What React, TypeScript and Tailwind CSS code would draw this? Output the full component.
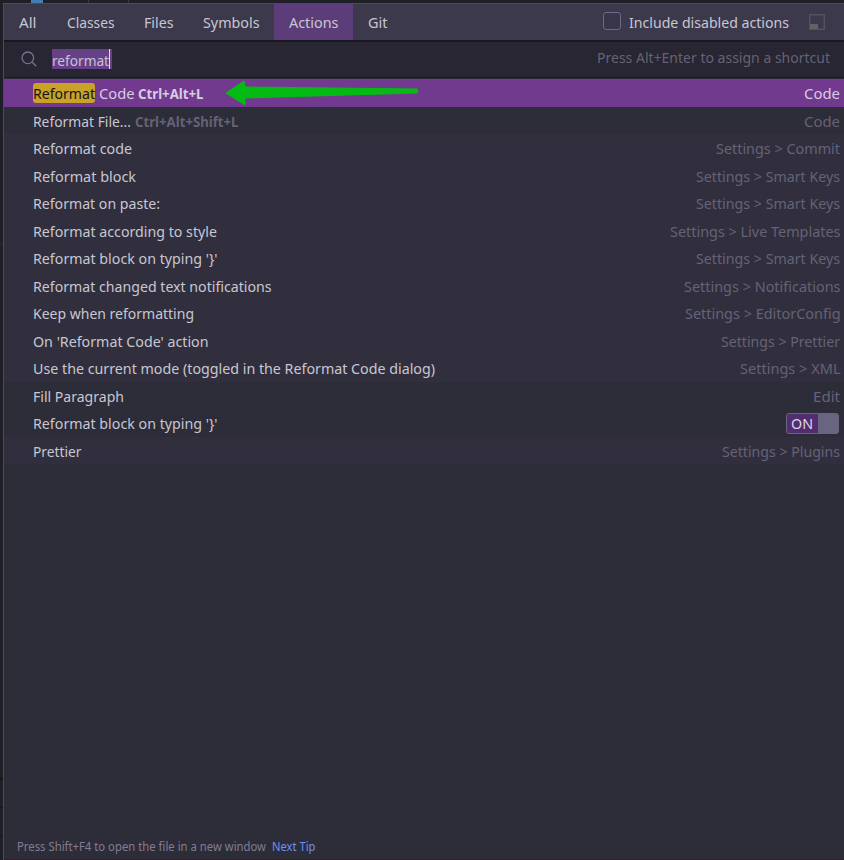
import { useLayoutEffect, useRef } from "react";

type FitProps = { w: number; children: string; className?: string };

/** A single line of text condensed horizontally to fill a given width. */
function Fit({ w, children, className = "" }: FitProps) {
  const ref = useRef<HTMLSpanElement>(null);
  useLayoutEffect(() => {
    const el = ref.current;
    if (!el) return;
    el.style.width = "auto";
    el.style.transform = "none";
    const range = document.createRange();
    range.selectNodeContents(el);
    const natural = range.getBoundingClientRect().width;
    el.style.width = `${w}px`;
    el.style.transform = `scaleX(${w / natural})`;
  }, [w, children]);
  return (
    <span ref={ref} className={`inline-block shrink-0 origin-left whitespace-pre ${className}`}>
      {children}
    </span>
  );
}

const tabs = [
  { label: "All", w: 17.5, box: "w-[48px] pl-[15px]" },
  { label: "Classes", w: 47.5, box: "w-[77px] pl-[15px]" },
  { label: "Files", w: 29.5, box: "w-[59px] pl-[15px]" },
  { label: "Symbols", w: 56.5, box: "w-[86px] pl-[15px]" },
  { label: "Actions", w: 49.5, box: "w-[79px] pl-[15px] bg-[#5c3d79]" },
  { label: "Git", w: 19.5, box: "w-[50px] pl-[15px]" },
];

const rows = [
  { text: "Reformat code", w: 99, path: "Settings > Commit", pw: 124 },
  { text: "Reformat block", w: 103, path: "Settings > Smart Keys", pw: 144 },
  { text: "Reformat on paste:", w: 127, path: "Settings > Smart Keys", pw: 144 },
  { text: "Reformat according to style", w: 184, path: "Settings > Live Templates", pw: 170.5 },
  { text: "Reformat block on typing '}'", w: 184.5, path: "Settings > Smart Keys", pw: 144 },
  { text: "Reformat changed text notifications", w: 238.5, path: "Settings > Notifications", pw: 156.5 },
  { text: "Keep when reformatting", w: 161, path: "Settings > EditorConfig", pw: 155.5 },
  { text: "On 'Reformat Code' action", w: 175.5, path: "Settings > Prettier", pw: 119 },
  { text: "Use the current mode (toggled in the Reformat Code dialog)", w: 402, path: "Settings > XML", pw: 100.5 },
];

const rowClass = "flex shrink-0 items-start justify-between pl-[29px] pr-1 pt-1 text-[#c8c7d1]";

export default function App() {
  return (
    <div className="flex h-[860px] w-[844px] flex-col overflow-hidden bg-[#1f1f27] font-['Noto_Sans',sans-serif] text-[15px] leading-[20px]">
      <div className="flex h-[3px] shrink-0">
        <div className="ml-[31px] h-full w-[12px] bg-[#447bb0]" />
        <div className="ml-[45px] h-full w-px bg-[#373740]" />
        <div className="ml-[39px] h-full w-px bg-[#373740]" />
      </div>
      <div className="flex min-h-0 flex-1">
        <div className="flex w-[3px] shrink-0 flex-col">
          <div className="h-[242px] border-b border-[#292932]" />
          <div className="h-[533px]" />
          <div className="h-[30px] border-t-2 border-b border-[#15151c]" />
          <div className="h-[28px] border-b border-[#15151c]" />
        </div>
        <div className="flex min-w-0 flex-1 flex-col border-l border-t border-[#4c4a5d] bg-[#2d2c39]">
          <div className="flex h-[36px] shrink-0 items-stretch bg-[#3c394d] text-[#c8c7d1]">
            {tabs.map((t) => (
              <div key={t.label} className={`flex shrink-0 items-center ${t.box}`}>
                <Fit w={t.w}>{t.label}</Fit>
              </div>
            ))}
            <div className="ml-auto flex items-center pr-[19px]">
              <div className="mb-[2px] mr-[8px] h-[18px] w-[18px] rounded-[3px] border border-[#716987] bg-[#393649]" />
              <Fit w={160}>Include disabled actions</Fit>
              <svg className="ml-[20px]" width="16" height="16" viewBox="0 0 16 16">
                <path d="M.75.75h14.5v14.5H.75z" fill="none" stroke="#545355" strokeWidth="1.5" />
                <path d="M1 10h8v5H1z" fill="#62625f" />
              </svg>
            </div>
          </div>
          <div className="flex h-[38px] shrink-0 items-center border-b border-t-2 border-[#191820] bg-[#272632] pl-[17px] pr-[14px]">
            <svg className="mb-px" width="16" height="16" viewBox="0 0 16 16" fill="none" stroke="#77728e" strokeWidth="1.3">
              <circle cx="6.8" cy="6.8" r="5.8" />
              <path d="m11 11 4.3 4.3" />
            </svg>
            <div className="mb-[2px] ml-[15px] flex h-5 w-[60px] items-center bg-[#664187] text-[#c8c1d3]">
              <Fit w={57} className="mt-[2px]">reformat</Fit>
              <div className="h-5 w-px bg-[#e0dce5]" />
            </div>
            <Fit w={233} className="mb-[6px] ml-auto text-[#656276]">Press Alt+Enter to assign a shortcut</Fit>
          </div>
          <div className="mt-px flex h-[28px] shrink-0 items-center bg-[#713a8f] pl-[29px] pr-1 text-[#d8cce0]">
            <span className="flex h-5 w-[62px] items-center rounded-[3px] bg-[#c9a227] text-[#16131a]">
              <Fit w={62}>Reformat</Fit>
            </span>
            <Fit w={35.5} className="ml-1">Code</Fit>
            <Fit w={65.5} className="ml-[3.5px] mt-[2px] text-[14px] font-bold">Ctrl+Alt+L</Fit>
            <Fit w={36} className="ml-auto">Code</Fit>
          </div>
          <div className={`${rowClass} h-[27px]`}>
            <Fit w={98}>Reformat File...</Fit>
            <Fit w={103.5} className="ml-1 mt-px text-[14px] font-bold text-[#656276]">Ctrl+Alt+Shift+L</Fit>
            <Fit w={36} className="ml-auto text-[#656276]">Code</Fit>
          </div>
          <div className="bg-[#312f3e]">
            {rows.map((r, i) => (
              <div key={i} className={`${rowClass} ${i % 2 === 0 ? "h-[28px]" : "h-[27px]"}`}>
                <Fit w={r.w}>{r.text}</Fit>
                <Fit w={r.pw} className="text-[#656276]">{r.path}</Fit>
              </div>
            ))}
          </div>
          <div className={`${rowClass} h-[27px]`}>
            <Fit w={91}>Fill Paragraph</Fit>
            <Fit w={27} className="text-[#656276]">Edit</Fit>
          </div>
          <div className={`${rowClass} h-[28px]`}>
            <Fit w={184.5}>{"Reformat block on typing '}'"}</Fit>
            <div className="mr-px flex h-[21px] w-[53px] overflow-hidden rounded-[3px] border border-[#69647f] bg-[#69647f]">
              <div className="flex w-[31px] items-center bg-[#522d70] pl-[4px] text-[#ddd6e3]">
                <Fit w={22} className="mb-[2px]">ON</Fit>
              </div>
            </div>
          </div>
          <div className={`${rowClass} h-[27px] bg-[#312f3e]`}>
            <Fit w={48.5}>Prettier</Fit>
            <Fit w={118} className="text-[#656276]">{"Settings > Plugins"}</Fit>
          </div>
          <div className="mt-auto flex h-[26px] shrink-0 items-center border-b border-[#33202f] pl-[13px] text-[12px] text-[#817d91]">
            <Fit w={249}>Press Shift+F4 to open the file in a new window</Fit>
            <Fit w={43.5} className="ml-[6px] text-[#6c91f2]">Next Tip</Fit>
          </div>
        </div>
      </div>
      <svg className="pointer-events-none absolute left-[224px] top-[79px]" width="198" height="28" viewBox="0 0 198 28">
        <path d="M2 14 20 2l1 6 172 2q2 2 0 4L21 19l0 7Z" fill="#04bb14" stroke="#04bb14" strokeWidth="1" strokeLinejoin="round" />
      </svg>
    </div>
  );
}
